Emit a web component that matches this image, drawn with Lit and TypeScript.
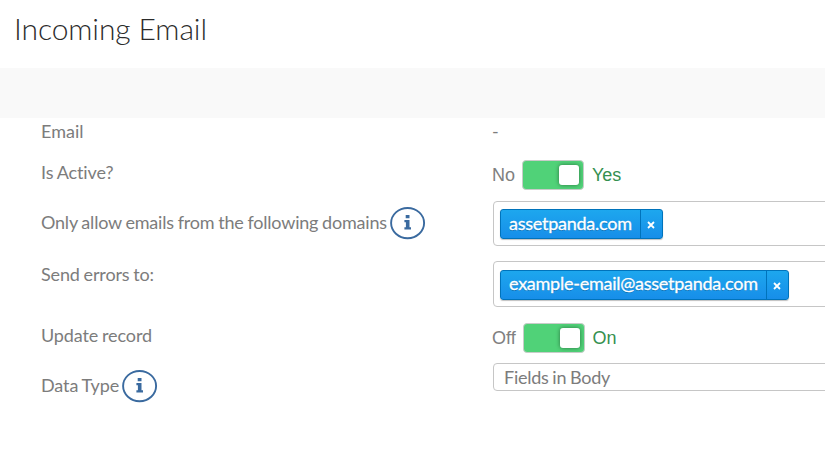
import { LitElement, html, css } from "lit";
import { customElement, property } from "lit/decorators.js";

@customElement("info-icon")
class InfoIcon extends LitElement {
  static styles = css`
    :host { display: block; width: 36px; height: 33px; margin-left: 3px; }
    svg { display: block; }
  `;
  render() {
    return html`<svg width="36" height="33" viewBox="0 0 36 33">
      <ellipse cx="17.6" cy="16.1" rx="16.5" ry="15.1" fill="none" stroke="#3a6a9f" stroke-width="1.9" />
      <path fill="#3a6a9f" d="M15.7 8h3.8v3.3h-3.8zM14.4 13h5.1v7.2h1.5v2.2h-6.6v-2.2h1.5v-5h-1.5z" />
    </svg>`;
  }
}

@customElement("toggle-switch")
class ToggleSwitch extends LitElement {
  @property() off = "";
  @property() on = "";
  static styles = css`
    :host { display: flex; align-items: center; height: 30px; margin-left: -1px; font: 18px/30px "Liberation Sans", Arial, sans-serif; letter-spacing: 0; color: #808080; }
    .track { box-sizing: border-box; width: 62px; height: 30px; margin: 0 7.5px 0 7.4px; padding: 4px 4px; display: flex; justify-content: flex-end; background: #50d278; border: 1px solid #c8ccc9; border-radius: 4px; }
    .knob { width: 20px; height: 20px; background: #fff; border-radius: 3px; box-shadow: 0 0 4px rgba(0, 0, 0, 0.45); }
    .on { color: #35904f; }
  `;
  render() {
    return html`<span>${this.off}</span><span class="track"><span class="knob"></span></span><span class="on">${this.on}</span>`;
  }
}

@customElement("tag-chip")
class TagChip extends LitElement {
  @property() text = "";
  static styles = css`
    :host { box-sizing: border-box; display: flex; height: 30px; border: 1px solid #0073bb; border-radius: 3px; background: linear-gradient(#1da7ee, #178ee9); box-shadow: 0 1px 1px rgba(0, 0, 0, 0.25); color: #fff; font: 18px/26px Lato, sans-serif; line-height: var(--chip-line, 26px); letter-spacing: -0.25px; text-shadow: 0 1px 0 rgba(0, 51, 83, 0.35); }
    .text { padding: 0 8px; white-space: nowrap; -webkit-text-stroke: 0.3px #fff; }
    .close { width: 21px; border-left: 1px solid #0073bb; display: grid; place-items: center; }
    svg { display: block; margin-top: 2px; }
  `;
  render() {
    return html`<span class="text">${this.text}</span><span class="close"><svg width="8" height="8" viewBox="0 0 8 8"><path d="M1 1l6 6M7 1l-6 6" stroke="#fff" stroke-width="1.8" /></svg></span>`;
  }
}

@customElement("app-root")
class AppRoot extends LitElement {
  static styles = css`
    :host { display: block; height: 456px; overflow: hidden; background: #fff; color: #7c7c7c; font: 18px/22px Lato, sans-serif; letter-spacing: -0.2px; word-spacing: -0.6px; }
    h1 { margin: 0; height: 68px; padding-left: 14px; box-sizing: border-box; font-weight: 300; font-size: 30px; line-height: 56px; letter-spacing: -0.1px; word-spacing: 0; color: #2b2b2b; }
    .band { height: 50px; background: #f9f9f9; }
    .row { display: grid; grid-template-columns: 452px 1fr; align-items: start; padding-left: 41px; box-sizing: border-box; white-space: nowrap; }
    .label { display: flex; align-items: center; }
    .box { box-sizing: border-box; width: 400px; border: 1px solid #c6c6c6; border-radius: 4px; display: flex; align-items: flex-start; padding: 7px 6px; }
    .email { height: 42px; padding-top: 2px; letter-spacing: 0; }
    .email .value { margin-left: -1px; }
    .active { height: 41px; }
    .active .label { padding-top: 1px; letter-spacing: -0.1px; }
    .domains { height: 60px; }
    .domains .label { padding-top: 6px; }
    .domains .box { height: 45px; }
    .errors { height: 62px; }
    .errors .label { padding-top: 2px; letter-spacing: -0.15px; }
    .errors .box { height: 46px; padding-top: 8px; }
    .errors tag-chip { --chip-line: 25px; }
    .update { height: 40px; }
    .update .label { padding-top: 1px; letter-spacing: -0.12px; }
    .type .label { padding-top: 7px; letter-spacing: -0.12px; }
    .type .box { height: 28px; padding: 2px 10px; letter-spacing: -0.25px; }
    .label-text { padding-bottom: 3px; }
  `;
  render() {
    return html`
      <h1>Incoming Email</h1>
      <div class="band"></div>
      <div class="row email"><span class="label">Email</span><span class="value">-</span></div>
      <div class="row active"><span class="label">Is Active?</span><toggle-switch off="No" on="Yes"></toggle-switch></div>
      <div class="row domains"><span class="label"><span class="label-text">Only allow emails from the following domains</span><info-icon></info-icon></span><div class="value"><div class="box"><tag-chip text="assetpanda.com"></tag-chip></div></div></div>
      <div class="row errors"><span class="label">Send errors to:</span><div class="value"><div class="box"><tag-chip text="example-email@assetpanda.com"></tag-chip></div></div></div>
      <div class="row update"><span class="label">Update record</span><toggle-switch off="Off" on="On"></toggle-switch></div>
      <div class="row type"><span class="label"><span class="label-text">Data Type</span><info-icon></info-icon></span><div class="value"><div class="box">Fields in Body</div></div></div>
    `;
  }
}
